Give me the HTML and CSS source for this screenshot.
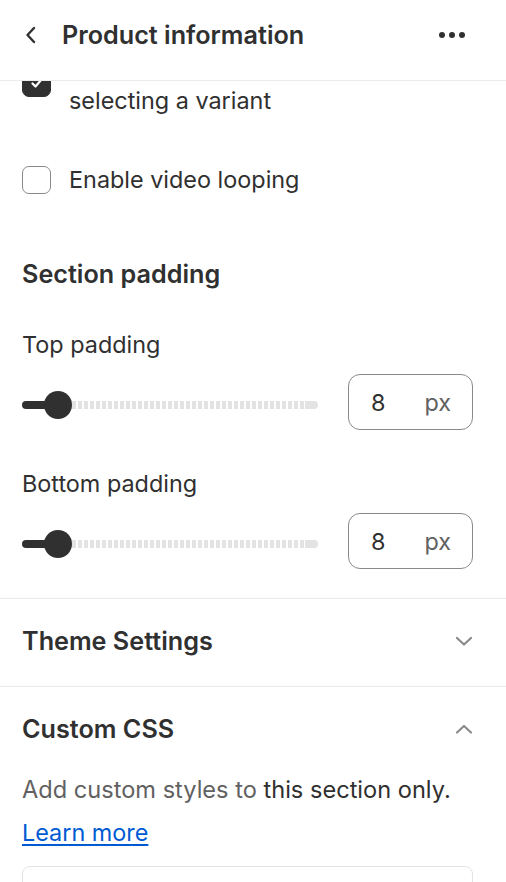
FILE: index.html
```html
<!DOCTYPE html>
<html>

<head>
    <title>Product information</title>
    <meta name="viewport" content="width=device-width, initial-scale=1.0">
    <link rel="stylesheet" href="styles.css">
</head>

<body>
    <div class="header">
        <svg class="back" width="14" height="20" viewBox="0 0 14 20">
            <path d="M10 3 L3.5 10 L10 17" fill="none" stroke="#303030" stroke-width="2.4" stroke-linecap="round" stroke-linejoin="round" />
        </svg>
        <h1 class="title">Product information</h1>
        <div class="dots"><span></span><span></span><span></span></div>
    </div>

    <div class="viewport">
        <div class="content">
            <div class="settings">
                <label class="check-row first">
                    <span class="box checked">
                        <svg width="16" height="16" viewBox="0 0 16 16">
                            <path d="M3.5 8.5 L6.5 11.5 L12.5 4.5" fill="none" stroke="#fff" stroke-width="2.2" stroke-linecap="round" stroke-linejoin="round" />
                        </svg>
                    </span>
                    <span class="check-text">Show variant media when<br>selecting a variant</span>
                </label>

                <label class="check-row second">
                    <span class="box"></span>
                    <span class="check-text">Enable video looping</span>
                </label>

                <h2 class="group-title">Section padding</h2>

                <div class="field">
                    <div class="field-label">Top padding</div>
                    <div class="range-row">
                        <div class="range">
                            <div class="range-fill"></div>
                            <div class="range-thumb"></div>
                            <div class="range-track"></div>
                        </div>
                        <div class="num-input"><span>8</span><span class="unit">px</span></div>
                    </div>
                </div>

                <div class="field bottom">
                    <div class="field-label">Bottom padding</div>
                    <div class="range-row">
                        <div class="range">
                            <div class="range-fill"></div>
                            <div class="range-thumb"></div>
                            <div class="range-track"></div>
                        </div>
                        <div class="num-input"><span>8</span><span class="unit">px</span></div>
                    </div>
                </div>
            </div>

            <div class="panel">
                <h2 class="panel-title">Theme Settings</h2>
                <svg class="chev" width="20" height="12" viewBox="0 0 20 12">
                    <path d="M3 3 L10 9.5 L17 3" fill="none" stroke="#8a8a8a" stroke-width="2.2" stroke-linecap="round" stroke-linejoin="round" />
                </svg>
            </div>

            <div class="panel open">
                <div class="panel-head">
                    <h2 class="panel-title">Custom CSS</h2>
                    <svg class="chev" width="20" height="12" viewBox="0 0 20 12">
                        <path d="M3 9.5 L10 3 L17 9.5" fill="none" stroke="#8a8a8a" stroke-width="2.2" stroke-linecap="round" stroke-linejoin="round" />
                    </svg>
                </div>
                <p class="help">Add custom styles to <span class="strong">this section only.</span></p>
                <a class="link" href="#">Learn more</a>
                <div class="editor">
                    <code><span class="sel">h2</span> <span class="prop">.title</span> {</code>
                </div>
            </div>
        </div>
    </div>
</body>

</html>
```

FILE: styles.css
```css
* {
    margin: 0;
    padding: 0;
    box-sizing: border-box;
}

body {
    font-family: Inter, "Noto Sans", sans-serif;
    color: #303030;
    background-color: #fff;
    width: 506px;
    height: 882px;
    overflow: hidden;
}

.header {
    height: 81px;
    display: flex;
    align-items: center;
    padding: 0 41px 10px 24px;
    border-bottom: 1px solid #ebebeb;
}

.back {
    margin-right: 24px;
}

.title {
    font-size: 25.2px;
    font-weight: 600;
    flex: 1;
}

.dots {
    display: flex;
    gap: 4px;
}

.dots span {
    width: 6px;
    height: 6px;
    border-radius: 50%;
    background-color: #303030;
}

.viewport {
    height: 801px;
    overflow: hidden;
}

.content {
    margin-top: -22px;
}

.settings {
    padding: 0 33px 29px 22px;
    border-bottom: 1px solid #ebebeb;
}

.check-row {
    display: flex;
    gap: 18px;
    font-size: 23.4px;
    line-height: 28px;
}

.check-row.second {
    margin-top: 51px;
}

.box {
    width: 29px;
    height: 28px;
    border: 1.5px solid #8a8a8a;
    border-radius: 7px;
    flex-shrink: 0;
    display: flex;
    align-items: center;
    justify-content: center;
}

.box.checked {
    background-color: #303030;
    border-color: #303030;
    margin-top: 10px;
}

.group-title {
    font-size: 25.2px;
    font-weight: 600;
    line-height: 28px;
    margin-top: 66px;
}

.field {
    margin-top: 43px;
}

.field.bottom {
    margin-top: 40px;
}

.field-label {
    font-size: 23.4px;
    line-height: 28px;
}

.range-row {
    display: flex;
    align-items: center;
    gap: 30px;
    margin-top: 15px;
}

.range {
    flex: 1;
    height: 28px;
    display: flex;
    align-items: center;
    margin-top: 5px;
}

.range-fill {
    width: 32px;
    height: 8px;
    background-color: #303030;
    border-radius: 4px 0 0 4px;
}

.range-thumb {
    width: 28px;
    height: 28px;
    border-radius: 50%;
    background-color: #303030;
    margin-left: -10px;
    flex-shrink: 0;
}

.range-track {
    flex: 1;
    height: 8px;
    border-radius: 0 4px 4px 0;
    background: repeating-linear-gradient(90deg, #e3e3e3 0 4px, transparent 4px 6px);
    position: relative;
}

.range-track::after {
    content: "";
    position: absolute;
    right: 0;
    top: 0;
    width: 13px;
    height: 8px;
    border-radius: 0 4px 4px 0;
    background-color: #e3e3e3;
}

.num-input {
    width: 125px;
    height: 56px;
    border: 1px solid #8a8a8a;
    border-radius: 12px;
    display: flex;
    align-items: center;
    justify-content: space-between;
    padding: 0 21px 0 22px;
    font-size: 23.4px;
}

.unit {
    color: #616161;
}

.panel {
    display: flex;
    align-items: center;
    justify-content: space-between;
    padding: 28px 33px 31px 22px;
    border-bottom: 1px solid #ebebeb;
}

.panel.open {
    display: block;
    border-bottom: none;
}

.panel-head {
    display: flex;
    align-items: center;
    justify-content: space-between;
}

.panel-title {
    font-size: 25.2px;
    font-weight: 600;
    line-height: 28px;
}

.chev {
    margin-right: -1px;
}

.help {
    font-size: 23.6px;
    line-height: 28px;
    color: #616161;
    margin-top: 33px;
}

.strong {
    color: #303030;
}

.link {
    display: inline-block;
    font-size: 23.4px;
    line-height: 28px;
    color: #005bd3;
    margin-top: 15px;
    text-underline-offset: 3px;
}

.editor {
    margin-top: 19px;
    border: 1px solid #e3e3e3;
    border-radius: 8px;
    height: 80px;
    padding: 14px 18px;
    font-family: "Liberation Mono", monospace;
    font-size: 20px;
    line-height: 24px;
}

.sel {
    color: #303030;
}

.prop {
    color: #1a7f37;
}
```
